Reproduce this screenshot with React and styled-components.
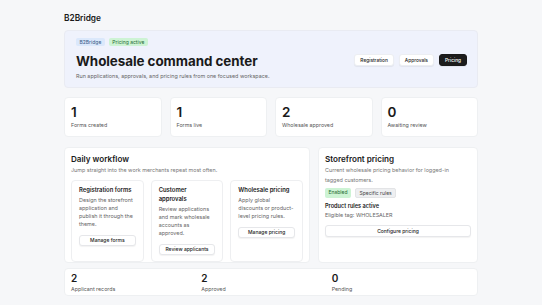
import React from "react";
import styled, { createGlobalStyle } from "styled-components";

const GlobalStyle = createGlobalStyle`
  * { box-sizing: border-box; }
  body {
    margin: 0;
    background: #f6f7f9;
    font-family: Inter, "Noto Sans", sans-serif;
    color: #1a1a1a;
  }
`;

const workflow = [
  {
    title: "Registration forms",
    text: "Design the storefront application and publish it through the theme.",
    action: "Manage forms",
  },
  {
    title: "Customer approvals",
    text: "Review applications and mark wholesale accounts as approved.",
    action: "Review applicants",
  },
  {
    title: "Wholesale pricing",
    text: "Apply global discounts or product-level pricing rules.",
    action: "Manage pricing",
  },
];

function App() {
  return (
    <Page>
      <GlobalStyle />
      <Brand>B2Bridge</Brand>
      <Hero>
        <HeroText>
          <Badges>
            <Badge tone="blue">B2Bridge</Badge>
            <Badge tone="green">Pricing active</Badge>
          </Badges>
          <Heading>Wholesale command center</Heading>
          <Sub>Run applications, approvals, and pricing rules from one focused workspace.</Sub>
        </HeroText>
        <Nav>
          <NavBtn>Registration</NavBtn>
          <NavBtn>Approvals</NavBtn>
          <NavBtn active>Pricing</NavBtn>
        </Nav>
      </Hero>

      <Stats>
        <StatCard><Num>1</Num><Label>Forms created</Label></StatCard>
        <StatCard><Num>1</Num><Label>Forms live</Label></StatCard>
        <StatCard><Num>2</Num><Label>Wholesale approved</Label></StatCard>
        <StatCard><Num>0</Num><Label>Awaiting review</Label></StatCard>
      </Stats>

      <Main>
        <Panel>
          <PanelTitle>Daily workflow</PanelTitle>
          <Muted>Jump straight into the work merchants repeat most often.</Muted>
          <Tasks>
            {workflow.map((w) => (
              <Task key={w.title}>
                <TaskTitle>{w.title}</TaskTitle>
                <Body>{w.text}</Body>
                <Button>{w.action}</Button>
              </Task>
            ))}
          </Tasks>
        </Panel>
        <Panel>
          <PanelTitle>Storefront pricing</PanelTitle>
          <Muted wide>Current wholesale pricing behavior for logged-in tagged customers.</Muted>
          <Badges spaced>
            <Badge tone="green">Enabled</Badge>
            <Badge tone="gray">Specific rules</Badge>
          </Badges>
          <Strong>Product rules active</Strong>
          <Body>Eligible tag: WHOLESALER</Body>
          <Button full>Configure pricing</Button>
        </Panel>
      </Main>

      <Summary>
        <SumItem><Num small>2</Num><Label>Applicant records</Label></SumItem>
        <SumItem><Num small>2</Num><Label>Approved</Label></SumItem>
        <SumItem><Num small>0</Num><Label>Pending</Label></SumItem>
      </Summary>
    </Page>
  );
}

export default App;

const Page = styled.div`
  width: 414px;
  margin: 0 auto;
  padding-top: 12px;
`;

const Brand = styled.div`
  font-size: 8.3px;
  font-weight: 600;
  line-height: 12px;
  margin-bottom: 6px;
`;

const Hero = styled.div`
  background: #eff2fc;
  border: 1px solid #e9ebf2;
  border-radius: 4px;
  padding: 7px 10px 8px 11px;
  display: flex;
  align-items: center;
  justify-content: space-between;
  height: 58px;
`;

const HeroText = styled.div``;

const Badges = styled.div`
  display: flex;
  gap: 4px;
  margin: ${(p) => (p.spaced ? "3px 0 3px" : "0")};
`;

const Badge = styled.span`
  font-size: 5px;
  line-height: 8px;
  padding: 0 3.5px;
  border-radius: 2px;
  background: ${(p) =>
    p.tone === "green" ? "#cdf3d4" : p.tone === "blue" ? "#dbe8fb" : "#eeeff1"};
  color: ${(p) =>
    p.tone === "green" ? "#1f6b32" : p.tone === "blue" ? "#3a5a86" : "#444"};
  border: ${(p) => (p.tone === "gray" ? "1px solid #e3e4e6" : "none")};
`;

const Heading = styled.h1`
  margin: 5px 0 1px;
  font-size: 13.4px;
  line-height: 20px;
  font-weight: 700;
  letter-spacing: -0.05px;
`;

const Sub = styled.div`
  font-size: 5.4px;
  line-height: 8px;
  color: #666;
`;

const Nav = styled.div`
  display: flex;
  gap: 5px;
  margin-top: 2px;
`;

const NavBtn = styled.button`
  font-family: inherit;
  font-size: 4.8px;
  font-weight: 500;
  height: 12px;
  padding: 0 5px;
  border-radius: 3px;
  border: ${(p) => (p.active ? "1px solid #1a1a1a" : "1px solid #eceef2")};
  background: ${(p) => (p.active ? "#1c1c1c" : "#fff")};
  color: ${(p) => (p.active ? "#fff" : "#222")};
  box-shadow: 0 1px 1px rgba(0, 0, 0, 0.06);
`;

const Stats = styled.div`
  display: grid;
  grid-template-columns: repeat(4, 1fr);
  gap: 8px;
  margin-top: 9px;
`;

const Card = styled.div`
  background: #fff;
  border: 1px solid #eef0f2;
  border-radius: 4px;
`;

const StatCard = styled(Card)`
  height: 40px;
  padding: 5px 6px;
`;

const Num = styled.div`
  font-size: ${(p) => (p.small ? "10px" : "13.5px")};
  font-weight: 600;
  line-height: ${(p) => (p.small ? "13px" : "18px")};
`;

const Label = styled.div`
  font-size: 5.3px;
  line-height: 8px;
  color: #555;
`;

const Main = styled.div`
  display: grid;
  grid-template-columns: 246px 1fr;
  gap: 8px;
  margin-top: 10px;
`;

const Panel = styled(Card)`
  height: 116px;
  padding: 5px 6px 6px;
  display: flex;
  flex-direction: column;
  align-items: flex-start;
`;

const PanelTitle = styled.h2`
  margin: 0;
  font-size: 8.1px;
  line-height: 13px;
  font-weight: 600;
`;

const Muted = styled.div`
  font-size: 5.4px;
  line-height: 9.5px;
  color: #777;
  max-width: ${(p) => (p.wide ? "134px" : "none")};
`;

const Tasks = styled.div`
  display: grid;
  grid-template-columns: repeat(3, 1fr);
  gap: 7px;
  margin-top: 4px;
  width: 100%;
  flex: 1;
`;

const Task = styled.div`
  border: 1px solid #eeeff1;
  border-radius: 4px;
  padding: 4px 7px 6px;
  display: flex;
  flex-direction: column;
  align-items: flex-start;
`;

const TaskTitle = styled.div`
  font-size: 5.9px;
  font-weight: 600;
  line-height: 9px;
  margin-bottom: 2px;
`;

const Body = styled.div`
  font-size: 5.4px;
  line-height: 8px;
  color: #666;
`;

const Strong = styled.div`
  font-size: 5.6px;
  font-weight: 600;
  line-height: 10px;
`;

const Button = styled.button`
  font-family: inherit;
  font-size: 5px;
  font-weight: 500;
  white-space: nowrap;
  color: #222;
  background: #fff;
  border: 1px solid #e6e7ea;
  border-radius: 3px;
  box-shadow: 0 1px 1px rgba(0, 0, 0, 0.05);
  height: ${(p) => (p.full ? "12px" : "11px")};
  padding: 0 3px;
  margin-top: ${(p) => (p.full ? "6px" : "7px")};
  align-self: stretch;
`;

const Summary = styled(Card)`
  margin-top: 5px;
  height: 28px;
  padding: 3px 15px 3px 6px;
  display: grid;
  grid-template-columns: repeat(3, 1fr);
`;

const SumItem = styled.div``;
